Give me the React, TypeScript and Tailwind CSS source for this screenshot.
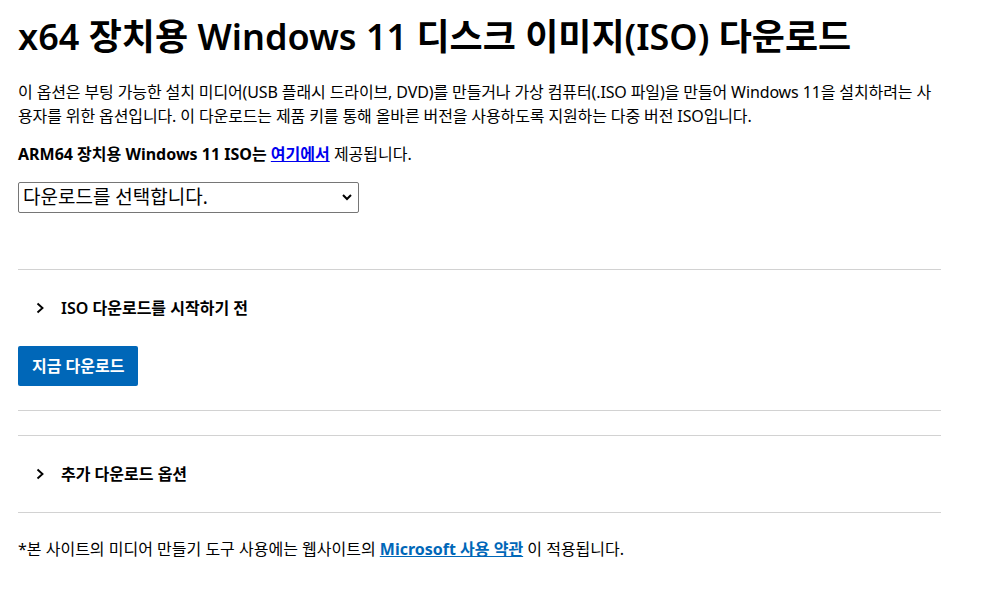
import React from "react";

const font = { fontFamily: '"Segoe UI", "Noto Sans", "Noto Sans CJK KR", sans-serif' };

function Chevron() {
  return (
    <svg width="10" height="12" viewBox="0 0 10 12" className="shrink-0">
      <path d="M1.5 1.5 L6.5 6 L1.5 10.5" fill="none" stroke="#000" strokeWidth="1.9" />
    </svg>
  );
}

export default function App() {
  return (
    <div className="bg-white min-h-[590px] text-black" style={font}>
      <div className="pl-[18px] w-[941px]">
        <h1 className="pt-[15px] text-[36px] leading-[44px] font-semibold">
          x64 장치용 Windows 11 디스크 이미지(ISO) 다운로드
        </h1>
        <p className="mt-[21px] text-[16px] leading-[24px] tracking-[-0.12px]">
          이 옵션은 부팅 가능한 설치 미디어(USB 플래시 드라이브, DVD)를 만들거나 가상 컴퓨터(.ISO 파일)을 만들어 Windows 11을 설치하려는 사용자를 위한 옵션입니다. 이 다운로드는 제품 키를 통해 올바른 버전을 사용하도록 지원하는 다중 버전 ISO입니다.
        </p>
        <p className="mt-[14px] text-[16px] leading-[24px]">
          <span className="font-bold">ARM64 장치용 Windows 11 ISO는 </span>
          <a className="font-bold text-[#0000ee] underline">여기에서</a> 제공됩니다.
        </p>
        <div className="mt-[16px] w-[341px] h-[31px] border border-[#767676] rounded-[2px] flex items-center justify-between pl-[4px] pr-[6px] text-[19px]">
          <span>다운로드를 선택합니다.</span>
          <svg width="10" height="7" viewBox="0 0 10 7">
            <path d="M1 1 L5 5 L9 1" fill="none" stroke="#000" strokeWidth="2" />
          </svg>
        </div>
        <div className="mt-[56px] border-t border-[#d2d2d2]" />
        <div className="h-[76px] flex items-center gap-[15px] pl-[18px] text-[16px] font-semibold">
          <Chevron />
          <span>ISO 다운로드를 시작하기 전</span>
        </div>
        <button className="h-[40px] px-[14px] bg-[#0067b8] text-white text-[16px] font-semibold rounded-[2px]">
          지금 다운로드
        </button>
        <div className="mt-[24px] border-t border-[#d2d2d2]" />
        <div className="mt-[24px] border-t border-[#d2d2d2]" />
        <div className="h-[76px] flex items-center gap-[15px] pl-[18px] text-[16px] font-semibold">
          <Chevron />
          <span>추가 다운로드 옵션</span>
        </div>
        <div className="border-t border-[#d2d2d2]" />
        <p className="mt-[24px] text-[16px] leading-[24px]">
          *본 사이트의 미디어 만들기 도구 사용에는 웹사이트의{" "}
          <a className="font-bold text-[#0067b8] underline">Microsoft 사용 약관</a> 이 적용됩니다.
        </p>
      </div>
    </div>
  );
}
